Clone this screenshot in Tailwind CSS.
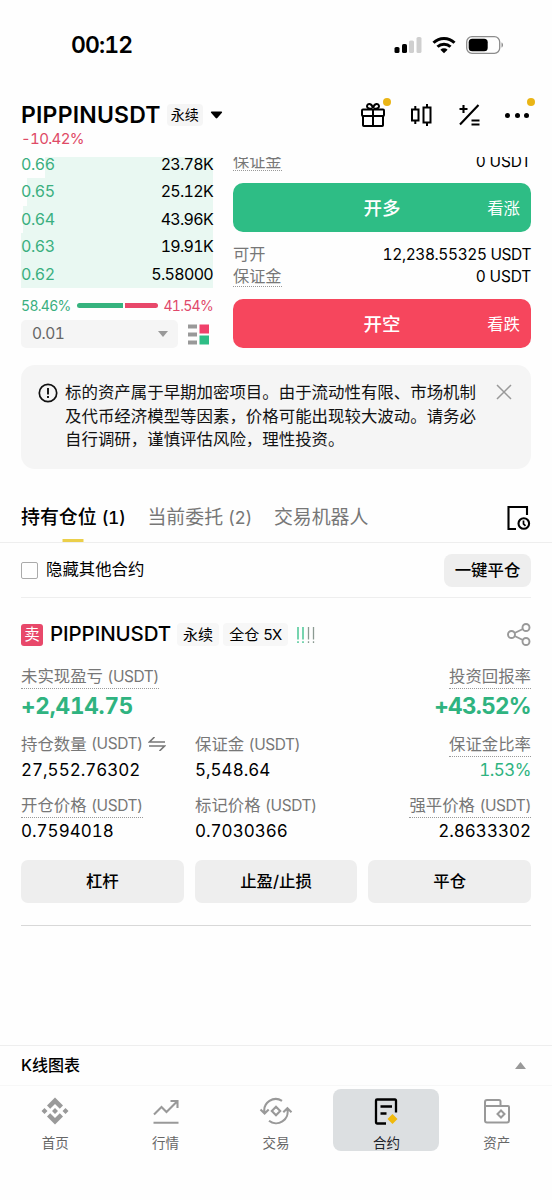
<!DOCTYPE html>
<html lang="zh-CN">
<head>
<meta charset="utf-8">
<meta name="viewport" content="width=device-width, initial-scale=1">
<title>PIPPINUSDT 永续</title>
<script src="https://cdn.jsdelivr.net/npm/@tailwindcss/browser@4"></script>
</head>
<body class="bg-[#fefefe]">
<div class="flex h-[1200px] w-[552px] flex-col overflow-hidden bg-[#fefefe] font-['Inter','Noto_Sans_CJK_SC',sans-serif] text-black tabular-nums whitespace-nowrap">

  <!-- Status bar -->
  <header class="flex h-[90px] shrink-0 items-center justify-between pr-[48px] pl-[71px]">
    <div class="text-[23px] leading-[30px] font-semibold tracking-[-0.9px]">00:12</div>
    <div class="flex items-center gap-[10px]">
      <svg class="h-[18px] w-[28px]" viewBox="0 0 28 18"><rect x="0.5" y="11" width="5" height="6" rx="1.6"/><rect x="8" y="8" width="5" height="9" rx="1.6"/><rect x="15" y="4.500" width="5" height="12.500" rx="1.600" fill="#cfcfcf"/><rect x="22.500" y="1" width="5" height="16" rx="1.600" fill="#cfcfcf"/></svg>
      <svg class="h-[18px] w-[24px]" viewBox="0 0 24 18" fill="none" stroke="#000" stroke-width="3"><path d="M1.500 6.700a15 15 0 0 1 21 0"/><path d="M5.500 10.800a9.300 9.300 0 0 1 13 0"/><path d="M8.400 13.700a5.200 5.200 0 0 1 7.200 0L12 17.300z" fill="#000" stroke="none"/></svg>
      <svg class="h-[18px] w-[38px]" viewBox="0 0 38 18"><rect x="0.700" y="0.700" width="33" height="16.600" rx="5.300" fill="none" stroke="#8c8c8c" stroke-width="1.300"/><rect x="2.700" y="2.700" width="19" height="12.600" rx="3.600"/><path d="M35.500 6.500c2 .6 2 4.400 0 5z" fill="#8c8c8c"/></svg>
    </div>
  </header>

  <!-- Symbol header -->
  <section class="flex h-[67px] shrink-0 justify-between pr-[22px] pl-[21px]">
    <div class="pt-[10px]">
      <div class="flex h-[30px] items-center">
        <h1 class="text-[23px] leading-[30px] font-semibold tracking-[0.2px]">PIPPINUSDT</h1>
        <span class="ml-[6px] rounded bg-[#f5f5f5] px-[4px] text-[14px] leading-[22px]">永续</span>
        <svg class="ml-[7px] h-[8px] w-[13px]" viewBox="0 0 13 8"><path d="M1.500.5h10q1 .3.400 1.300L7.300 7q-.8.800-1.600 0L1.100 1.800Q.5.800 1.500.5z"/></svg>
      </div>
      <div class="text-[15px] leading-[18px] tracking-[-0.65px] text-[#df4a66]">-10.42%</div>
    </div>
    <div class="flex h-[50px] items-center gap-[22px]">
      <div class="relative">
        <svg class="h-[26px] w-[26px]" viewBox="0 0 26 26" fill="none" stroke="#000" stroke-width="2"><rect x="2" y="7.500" width="22" height="6.500" rx="1"/><path d="M3 14v9.200q0 .8.800.8h18.400q.8 0 .8-.8V14M13 7.500V24M12.500 7C8.500 7 7 6 7 4.300 7 1 12 .8 12.800 6M13.500 7C17.500 7 19 6 19 4.300 19 1 14 .8 13.200 6"/></svg>
        <i class="absolute -top-[4px] left-[23px] size-[8px] rounded-full bg-[#eab516]"></i>
      </div>
      <svg class="h-[26px] w-[26px]" viewBox="0 0 26 26" fill="none" stroke="#000" stroke-width="2"><path d="M4 7.500h6.500v11H4zM7.300 4v3.500M7.300 18.500V22M15.500 5.500h7v15h-7zM19 2v3.500M19 20.500V24"/></svg>
      <svg class="h-[26px] w-[26px]" viewBox="0 0 26 26" fill="none" stroke="#000" stroke-width="2.100"><path d="M22.500 3 4 22.500M3.500 7h8M7.500 3v8M15.500 18.500h8M15.500 22.500h8"/></svg>
      <div class="relative flex h-[26px] w-[26px] items-center justify-between px-[1px]">
        <i class="size-[5px] rounded-full bg-black"></i><i class="size-[5px] rounded-full bg-black"></i><i class="size-[5px] rounded-full bg-black"></i>
        <i class="absolute -top-[4px] left-[23px] size-[8px] rounded-full bg-[#eab516]"></i>
      </div>
    </div>
  </section>

  <!-- Order book and order entry, scrolled under the header -->
  <section class="flex h-[191px] shrink-0 justify-between overflow-hidden px-[21px]">
    <div class="w-[192px]">
      <ul class="-mt-[6px] text-[16px] leading-[27.400px] tracking-[-0.700px]">
        <li class="flex justify-between bg-[linear-gradient(to_right,transparent_24px,#e9f8f2_24px)]"><span class="tracking-[-0.400px] text-[#3aaf80]">0.66</span><span>23.78K</span></li>
        <li class="flex justify-between bg-[linear-gradient(to_right,transparent_6px,#e9f8f2_6px)]"><span class="tracking-[-0.400px] text-[#3aaf80]">0.65</span><span>25.12K</span></li>
        <li class="flex justify-between bg-[linear-gradient(to_right,transparent_2px,#e9f8f2_2px)]"><span class="tracking-[-0.400px] text-[#3aaf80]">0.64</span><span>43.96K</span></li>
        <li class="flex justify-between bg-[#e9f8f2]"><span class="tracking-[-0.400px] text-[#3aaf80]">0.63</span><span>19.91K</span></li>
        <li class="flex justify-between bg-[#e9f8f2]"><span class="tracking-[-0.400px] text-[#3aaf80]">0.62</span><span>5.58000</span></li>
      </ul>
      <div class="mt-[7px] flex h-[20px] items-center justify-between text-[14px] tracking-[-0.700px]">
        <span class="text-[#3aaf80]">58.46%</span>
        <span class="flex gap-[2px]"><i class="h-[5px] w-[46px] rounded-l-full bg-[#36b37e]"></i><i class="h-[5px] w-[33px] rounded-r-full bg-[#e8486a]"></i></span>
        <span class="text-[#e0486a]">41.54%</span>
      </div>
      <div class="mt-[5px] flex items-center">
        <div class="flex h-[28px] w-[157px] items-center justify-between rounded-[5px] bg-[#f5f5f5] pr-[10px] pl-[11px] text-[15.500px] tracking-[-0.500px] text-[#666]">0.01
          <svg class="h-[6px] w-[10px]" viewBox="0 0 10 6" fill="#999"><path d="M0 0h10L5 6z"/></svg></div>
        <svg class="ml-[10px] h-[21px] w-[21px]" viewBox="0 0 21 21" fill="#999"><path d="M0 .5h9v4H0zM0 8.500h9v4H0zM0 16.500h9v4H0z"/><path d="M11.500.5H21v9h-9.500z" fill="#f0416a"/><path d="M11.500 11.500H21v9h-9.500z" fill="#2ebd85"/></svg>
      </div>
    </div>
    <div class="w-[298px] text-[16.200px] leading-[22px]">
      <div class="-mt-[8px] flex h-[22px] justify-between">
        <span class="h-[22px] border-b border-dotted border-[#999] leading-[24px] text-[#777]">保证金</span><span class="text-[15.500px] leading-[26px] tracking-[-0.2px]">0 USDT</span>
      </div>
      <div class="mt-[12px] flex h-[49px] items-center rounded-[10px] bg-[#2ebd85] pr-[11px] pl-[87px] text-white"><span class="flex-1 text-center text-[18.500px] font-medium">开多</span><span class="w-[76px] text-right text-[16.400px]">看涨</span></div>
      <div class="mt-[11px] flex h-[22px] justify-between"><span class="text-[#777]">可开</span><span class="text-[15.500px] leading-[24px] tracking-[-0.400px]">12,238.55325 USDT</span></div>
      <div class="flex h-[22px] justify-between"><span class="h-[22px] border-b border-dotted border-[#999] text-[#777]">保证金</span><span class="text-[15.500px] leading-[24px] tracking-[-0.2px]">0 USDT</span></div>
      <div class="mt-[12px] flex h-[49px] items-center rounded-[10px] bg-[#f6465d] pr-[11px] pl-[87px] text-white"><span class="flex-1 text-center text-[18.500px] leading-[20px] font-medium">开空</span><span class="w-[76px] text-right text-[16.400px]">看跌</span></div>
    </div>
  </section>

  <!-- Risk notice -->
  <section class="mx-[21px] mt-[17px] flex h-[104px] shrink-0 rounded-[14px] bg-[#f5f5f5] pt-[16px] pl-[17px]">
    <svg class="mt-[2px] h-[20px] w-[20px]" viewBox="0 0 20 20" fill="none" stroke="#111" stroke-width="1.700"><circle cx="10" cy="10" r="8.700"/><path d="M10 5v6.500M10 13v2" stroke-width="1.900"/></svg>
    <p class="ml-[7px] text-[16.450px] leading-[23.500px] text-[#111]">标的资产属于早期加密项目。由于流动性有限、市场机制<br>及代币经济模型等因素，价格可能出现较大波动。请务必<br>自行调研，谨慎评估风险，理性投资。</p>
    <svg class="mt-[3px] ml-[20px] h-[16px] w-[16px]" viewBox="0 0 16 16" fill="none" stroke="#999" stroke-width="1.500"><path d="M1 1l14 14M15 1 1 15"/></svg>
  </section>

  <!-- Position tabs -->
  <nav class="mt-[25px] flex h-[49px] shrink-0 items-center border-b border-[#eee] px-[21px] text-[18.900px] leading-[28px] text-[#777]">
    <div class="relative flex h-full items-center font-medium text-black"><span>持有仓位 <span class="text-[17.500px] tracking-[-0.4px]">(1)</span></span><i class="absolute bottom-0 left-1/2 h-[3px] w-[21px] -translate-x-1/2 bg-[#ebcf4a]"></i></div>
    <div class="ml-[22px]">当前委托 <span class="text-[17.500px] tracking-[-0.4px]">(2)</span></div>
    <div class="ml-[22px]">交易机器人</div>
    <svg class="ml-auto h-[26px] w-[25px]" viewBox="0 0 25 26" fill="none" stroke="#000" stroke-width="2.100"><path d="M21 10V2H2.500v22H10"/><circle cx="17.800" cy="18.500" r="5.300"/><path d="M17.500 15.500v3.300l2 2" stroke-width="1.700"/></svg>
  </nav>

  <div class="mx-[21px] flex h-[55px] shrink-0 items-center border-b border-[#eee] text-[16.400px]">
    <i class="size-[17px] rounded-[2px] border border-[#aaa]"></i>
    <span class="ml-[8px] pb-[1px]">隐藏其他合约</span>
    <button class="ml-auto h-[33px] w-[87px] rounded-[8px] bg-[#eee] font-medium">一键平仓</button>
  </div>

  <!-- Position card -->
  <article class="mx-[21px] flex h-[328px] shrink-0 flex-col border-b border-[#d8d8d8] text-[16.400px]">
    <div class="mt-[25px] flex h-[23px] items-center">
      <span class="flex h-[22px] w-[22px] items-center justify-center rounded-[3px] bg-[#e8486a] text-[15.500px] text-white">卖</span>
      <h2 class="ml-[7px] text-[20.500px] font-medium tracking-[-0.1px]">PIPPINUSDT</h2>
      <span class="ml-[6px] rounded bg-[#f7f7f7] px-[6px] text-[15px] leading-[23px]">永续</span>
      <span class="ml-[4px] rounded bg-[#f7f7f7] px-[6px] text-[15px] leading-[23px]">全仓 <span class="tracking-[-0.8px]">5X</span></span>
      <svg class="ml-[9px] h-[16px] w-[18px]" viewBox="0 0 18 16" fill="none" stroke-width="1.300" stroke-dasharray="12.500 1.800 1.700"><path d="M1 0v16M6 0v16" stroke="#2ebd85"/><path d="M11.500 0v16M16.500 0v16" stroke="#8b9a92"/></svg>
      <svg class="ml-auto h-[23px] w-[24px]" viewBox="0 0 24 23" fill="none" stroke="#999" stroke-width="1.900"><circle cx="4.500" cy="11.500" r="3.500"/><circle cx="19" cy="4.500" r="3.500"/><circle cx="19" cy="18.500" r="3.500"/><path d="M7.600 10l8.300-4M7.600 13l8.300 4"/></svg>
    </div>
    <div class="mt-[19px] flex justify-between leading-[22px] text-[#777]">
      <span class="h-[24px] border-b border-dotted border-[#999]">未实现盈亏 <span class="text-[15.500px] tracking-[-0.45px]">(USDT)</span></span>
      <span class="h-[24px] border-b border-dotted border-[#999]">投资回报率</span>
    </div>
    <div class="mt-[2px] flex justify-between text-[22.500px] leading-[30px] font-bold tracking-[-0.200px] text-[#2fb380]"><span>+2,414.75</span><span class="tracking-[-0.7px]">+43.52%</span></div>
    <div class="mt-[12px] grid grid-cols-[174px_1fr_auto] leading-[22px] text-[#777]">
      <span class="flex h-[22px] items-center">持仓数量&nbsp;<span class="text-[15.500px] tracking-[-0.45px]">(USDT)</span><svg class="ml-[5px] h-[14px] w-[18px]" viewBox="0 0 18 14" fill="none" stroke="#777" stroke-width="1.600"><path d="M6.500 0 1.500 5H17M1 9h15.500l-5 5"/></svg></span>
      <span>保证金 <span class="text-[15.500px] tracking-[-0.45px]">(USDT)</span></span>
      <span class="h-[24px] border-b border-dotted border-[#999]">保证金比率</span>
    </div>
    <div class="mt-[1px] grid grid-cols-[174px_1fr_auto] text-[17px] leading-[24px]"><span>27,552.76302</span><span>5,548.64</span><span class="tracking-[-0.500px] text-[#2fb380]">1.53%</span></div>
    <div class="mt-[12px] grid grid-cols-[174px_1fr_auto] leading-[22px] text-[#777]">
      <span class="h-[24px] justify-self-start border-b border-dotted border-[#999]">开仓价格 <span class="text-[15.500px] tracking-[-0.45px]">(USDT)</span></span>
      <span>标记价格 <span class="text-[15.500px] tracking-[-0.45px]">(USDT)</span></span>
      <span class="h-[24px] border-b border-dotted border-[#999]">强平价格 <span class="text-[15.500px] tracking-[-0.45px]">(USDT)</span></span>
    </div>
    <div class="mt-[1px] grid grid-cols-[174px_1fr_auto] text-[17px] leading-[24px]"><span>0.7594018</span><span>0.7030366</span><span>2.8633302</span></div>
    <div class="mt-[17px] grid h-[43px] grid-cols-3 gap-[11px] font-medium">
      <button class="rounded-[7px] bg-[#eee]">杠杆</button><button class="rounded-[7px] bg-[#eee]">止盈/止损</button><button class="rounded-[7px] bg-[#eee]">平仓</button>
    </div>
  </article>

  <!-- Chart drawer -->
  <div class="mt-auto flex h-[41px] shrink-0 items-center justify-between border-y border-t-[#eee] border-b-[#f7f7f7] pr-[26px] pl-[21px] text-[16px] font-medium"><span class="pb-[2px]">K线图表</span>
    <svg class="h-[7px] w-[11px]" viewBox="0 0 11 7" fill="#999"><path d="M0 7h11L5.500 0z"/></svg>
  </div>

  <!-- Bottom navigation -->
  <nav class="grid h-[114px] shrink-0 grid-cols-5 pt-[3px] text-[13.500px] leading-[20px] text-[#666]">
    <div class="flex flex-col items-center"><svg class="mt-[8px] h-[28px] w-[28px]" viewBox="0 0 28 28" fill="#999"><path d="M14 .5l8 8-3.200 3.200L14 6.900l-4.800 4.800L6 8.500zM14 27.500l8-8-3.200-3.200L14 21.100l-4.800-4.800L6 19.500zM14 11l3 3-3 3-3-3zM3.500 11l3 3-3 3-3-3zM24.500 11l3 3-3 3-3-3z"/></svg><span class="mt-[8px]">首页</span></div>
    <div class="flex flex-col items-center"><svg class="mt-[8px] h-[28px] w-[28px]" viewBox="0 0 28 28" fill="none" stroke="#999" stroke-width="2.100"><path d="M2 17.500 9.500 10l5 5L25 4.500M18.500 4H25.500v7M1.500 25.800h25"/></svg><span class="mt-[8px]">行情</span></div>
    <div class="flex flex-col items-center"><svg class="mt-[8px] h-[28px] w-[34px]" viewBox="0 0 34 28" fill="none" stroke="#999" stroke-width="2.100"><path d="M23 3.800A11.500 11.500 0 0 0 5.500 15.500M1.500 12.500l4.100 4 4.100-4M10 23.800A11.500 11.500 0 0 0 28.300 12M24.300 15.200l4.100-4 4.100 4M17 9.800l4.200 4.200-4.200 4.200-4.200-4.200z"/></svg><span class="mt-[8px]">交易</span></div>
    <div class="flex flex-col items-center"><div class="flex h-[62px] w-[106px] flex-col items-center rounded-[8px] bg-[#dcdfe1] text-[#1c2229]"><svg class="mt-[8px] h-[28px] w-[28px] shrink-0" viewBox="0 0 28 28" fill="none" stroke="#000" stroke-width="2.300"><path d="M24 15.500V3.500q0-1-1-1H5q-1 0-1 1v22q0 1 1 1h9M8.500 9.500h11.500M8.500 16.500h6"/><path d="M20.500 17l5 5-5 5-5-5z" fill="#f0b90b" stroke="none"/></svg><span class="mt-[8px]">合约</span></div></div>
    <div class="flex flex-col items-center"><svg class="mt-[8px] h-[28px] w-[28px]" viewBox="0 0 28 28" fill="none" stroke="#999" stroke-width="2"><path d="M2 8V23.500q0 2 2 2H24q2 0 2-2V10q0-1-1-1H3Q2 9 2 8V5q0-2 2-2H16q1.500 0 1.500 1.500V9"/><path d="M18 13.500l3.500 3.500-3.500 3.500-3.500-3.500z"/></svg><span class="mt-[8px]">资产</span></div>
  </nav>
</div>
</body>
</html>
